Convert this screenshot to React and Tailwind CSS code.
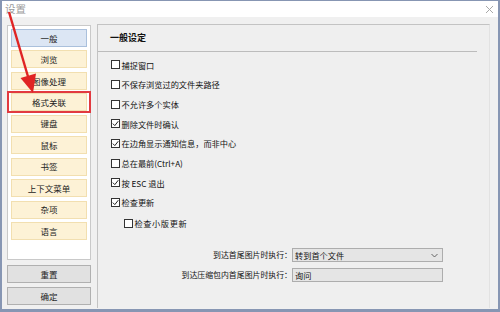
import { useState } from 'react';

const navItems = ['一般', '浏览', '图像处理', '格式关联', '键盘', '鼠标', '书签', '上下文菜单', '杂项', '语言'];

const options = [
  { label: '捕捉窗口', checked: false },
  { label: '不保存浏览过的文件夹路径', checked: false },
  { label: '不允许多个实体', checked: false },
  { label: '删除文件时确认', checked: true },
  { label: '在边角显示通知信息，而非中心', checked: true },
  { label: '总在最前(Ctrl+A)', checked: false },
  { label: '按 ESC 退出', checked: true },
  { label: '检查更新', checked: true },
];

function Checkbox({ checked }) {
  return (
    <span className="w-[9px] h-[9px] border border-[#333] bg-white flex items-center justify-center shrink-0">
      {checked && (
        <svg width="7" height="7" viewBox="0 0 7 7">
          <path d="M0.8 3.6 L2.8 5.6 L6.3 1.2" fill="none" stroke="#222" strokeWidth="1" />
        </svg>
      )}
    </span>
  );
}

function Select({ value, arrow }) {
  return (
    <div className="w-[151px] h-[14px] border border-[#adadad] bg-[#e5e5e5] flex items-center justify-between px-[2px] text-[8.2px] text-[#111]">
      <span>{value}</span>
      {arrow && (
        <svg width="7" height="5" viewBox="0 0 7 5" className="mr-[2px]">
          <path d="M0.5 1 L3.5 4 L6.5 1" fill="none" stroke="#555" strokeWidth="0.9" />
        </svg>
      )}
    </div>
  );
}

export default function App() {
  const [active] = useState(0);

  return (
    <div
      className="w-[500px] h-[312px] overflow-hidden relative bg-[#8796b3] pt-px px-[2px] pb-[3px]"
      style={{ fontFamily: '"Noto Sans CJK SC", "Noto Sans", sans-serif' }}
    >
      <div className="h-full bg-[#f0f0f0] flex flex-col">
        {/* title bar */}
        <div className="h-[16px] bg-white flex items-center justify-between pl-[3px] pr-[4px] shrink-0">
          <span className="text-[10.5px] text-[#9a9a9a]">设置</span>
          <svg width="9" height="9" viewBox="0 0 9 9">
            <path d="M1 1 L8 8 M8 1 L1 8" stroke="#a8a8a8" strokeWidth="1" />
          </svg>
        </div>

        <div className="flex items-start pl-[5px] pt-[8px] gap-[6px]">
          {/* left column */}
          <div className="w-[84px] flex flex-col">
            <div className="h-[235px] border border-[#c9c9c9] bg-white p-[3px] flex flex-col gap-[3.45px]">
              {navItems.map((item, i) => (
                <div key={item} className="relative">
                  <div
                    className={
                      i === active
                        ? 'h-[18px] border border-[#aac0dc] bg-[#dce6f4] flex items-center justify-center text-[8.5px] text-[#222]'
                        : 'h-[18px] border border-[#f2dfb0] bg-[#fdf2d6] flex items-center justify-center text-[8.5px] text-[#222]'
                    }
                  >
                    {item}
                  </div>
                  {item === '格式关联' && (
                    <div className="absolute -inset-x-[4px] -inset-y-[2px] border-2 border-[#e23a40]" />
                  )}
                </div>
              ))}
            </div>
            <div className="mt-[5px] h-[18px] border border-[#b0b0b0] bg-[#e1e1e1] flex items-center justify-center text-[8.5px] text-[#222]">
              重置
            </div>
            <div className="mt-[4px] h-[18px] border border-[#b0b0b0] bg-[#e1e1e1] flex items-center justify-center text-[8.5px] text-[#222]">
              确定
            </div>
          </div>

          {/* right panel */}
          <div className="-mt-px w-[393px] h-[284px] border-t border-l border-[#c3c3c3] border-r border-r-[#e2e2e2] bg-[#efefef] flex flex-col">
            <div className="pl-[12px] h-[26px] flex items-center text-[9px] font-bold text-[#111]">一般设定</div>
            <div className="w-[379px] h-px bg-[#bcbcbc]" />
            <div className="pl-[13px] pt-[3px] flex flex-col">
              {options.map((o) => (
                <div key={o.label} className="h-[19.65px] flex items-center gap-[1.5px] text-[8.2px] text-[#111]">
                  <Checkbox checked={o.checked} />
                  <span>{o.label}</span>
                </div>
              ))}
              <div className="h-[21px] pt-[1.5px] pl-[12.5px] flex items-center gap-[2px] text-[8.2px] text-[#111] tracking-[0.6px]">
                <Checkbox checked={false} />
                <span>检查小版更新</span>
              </div>
            </div>
            <div className="mt-[15px] flex flex-col gap-[6px] text-[7.9px] text-[#111]">
              <div className="flex items-center">
                <span className="w-[194px] text-right">到达首尾图片时执行：</span>
                <Select value="转到首个文件" arrow />
              </div>
              <div className="flex items-center">
                <span className="w-[194px] text-right">到达压缩包内首尾图片时执行：</span>
                <Select value="询问" />
              </div>
            </div>
          </div>
        </div>
      </div>

      {/* annotation arrow */}
      <svg className="absolute left-0 top-0 pointer-events-none" width="60" height="100" viewBox="0 0 60 100">
        <line x1="9" y1="12" x2="29" y2="80" stroke="#e02424" strokeWidth="2.4" />
        <polygon points="33,93 20.5,78 36,73.5" fill="#e02424" />
      </svg>
    </div>
  );
}
